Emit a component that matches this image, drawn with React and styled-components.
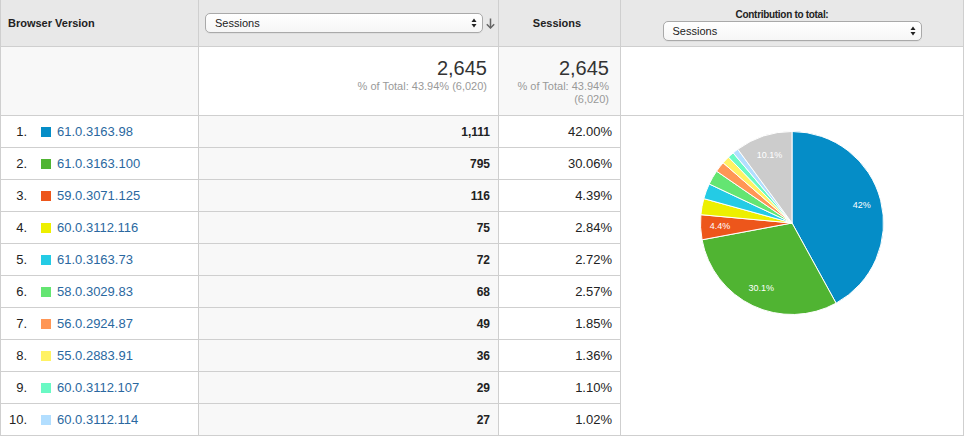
import React from "react";
import styled, { createGlobalStyle } from "styled-components";

const Global = createGlobalStyle`
  html, body { margin: 0; padding: 0; background: #fff; }
  body { font-family: "Liberation Sans", Arial, sans-serif; color: #333; }
`;

const Table = styled.div`
  display: grid;
  grid-template-columns: 198px 300px 122px 343px;
  grid-template-rows: 47px 69px repeat(10, 32px);
  border-left: 1px solid #cfcfcf;
  width: max-content;
`;

const Cell = styled.div`
  box-sizing: border-box;
  border-right: 1px solid #cfcfcf;
  border-bottom: 1px solid #cfcfcf;
  background: ${(p) => (p.$shade ? "#f8f8f8" : "#fff")};
  min-width: 0;
`;

const HeadCell = styled(Cell)`
  background: #e8e8e8;
  display: flex;
  align-items: center;
  justify-content: ${(p) => p.$justify || "flex-start"};
  padding: 0 ${(p) => p.$padR || 0}px 0 ${(p) => p.$padL || 0}px;
  font-size: 11px;
  font-weight: bold;
  color: #222;
`;

const HeadStack = styled(HeadCell)`
  flex-direction: column;
  justify-content: flex-start;
  padding-top: 8px;
  gap: 0;
`;

const HeadLabel = styled.div`
  font-size: 10px;
  letter-spacing: -0.3px;
  line-height: 13px;
  padding-right: 20px;
`;

const SelectBox = styled.div`
  box-sizing: border-box;
  width: ${(p) => p.$w}px;
  height: 20px;
  border: 1px solid #a9a9a9;
  border-radius: 5px;
  background: linear-gradient(#ffffff, #f6f6f6);
  box-shadow: 0 1px 0 rgba(0, 0, 0, 0.04);
  display: flex;
  align-items: center;
  justify-content: space-between;
  padding: 0 5px 0 9px;
  font-size: 11px;
  font-weight: normal;
  color: #222;
`;

const SortIcon = styled.svg`
  margin-left: 3px;
  flex: none;
`;

const TotalCell = styled(Cell)`
  padding: 9px ${(p) => p.$padR}px 0 8px;
  text-align: right;
`;

const BigNum = styled.div`
  font-size: 20px;
  line-height: 24px;
  color: #333;
`;

const SubNum = styled.div`
  font-size: 11px;
  line-height: 13px;
  color: #999;
`;

const NameCell = styled(Cell)`
  display: flex;
  align-items: center;
  padding-left: 8px;
  font-size: 13px;
`;

const RowNum = styled.span`
  width: 18px;
  text-align: right;
  color: #222;
`;

const Swatch = styled.span`
  width: 10px;
  height: 10px;
  margin-left: 14px;
  margin-right: 6px;
  background: ${(p) => p.$c};
  flex: none;
`;

const Link = styled.a`
  color: #2a68a0;
  text-decoration: none;
`;

const ValueCell = styled(Cell)`
  display: flex;
  align-items: center;
  justify-content: flex-end;
  padding-right: ${(p) => p.$padR}px;
  font-size: ${(p) => (p.$bold ? 12 : 13)}px;
  font-weight: ${(p) => (p.$bold ? "bold" : "normal")};
  color: #222;
`;

const PieCell = styled(Cell)`
  grid-column: 4;
  grid-row: 3 / span 10;
  display: flex;
  justify-content: center;
  align-items: flex-start;
  padding-top: 15px;
`;

const rows = [
  ["61.0.3163.98", "#058dc7", "1,111", "42.00%", 42.0],
  ["61.0.3163.100", "#50b432", "795", "30.06%", 30.06],
  ["59.0.3071.125", "#ed561b", "116", "4.39%", 4.39],
  ["60.0.3112.116", "#edef00", "75", "2.84%", 2.84],
  ["61.0.3163.73", "#24cbe5", "72", "2.72%", 2.72],
  ["58.0.3029.83", "#64e572", "68", "2.57%", 2.57],
  ["56.0.2924.87", "#ff9655", "49", "1.85%", 1.85],
  ["55.0.2883.91", "#fff263", "36", "1.36%", 1.36],
  ["60.0.3112.107", "#6af9c4", "29", "1.10%", 1.1],
  ["60.0.3112.114", "#b2deff", "27", "1.02%", 1.02],
];

const Arrows = () => (
  <svg width="6" height="10" viewBox="0 0 6 10">
    <path d="M3 0.5 L5.5 4 L0.5 4 Z" fill="#222" />
    <path d="M3 9.5 L5.5 6 L0.5 6 Z" fill="#222" />
  </svg>
);

const Select = ({ w }) => (
  <SelectBox $w={w}>
    <span>Sessions</span>
    <Arrows />
  </SelectBox>
);

function Pie() {
  const cx = 92;
  const cy = 92;
  const r = 91.5;
  const slices = rows.map((r) => ({ v: r[4], c: r[1] }));
  const sum = slices.reduce((a, b) => a + b.v, 0);
  slices.push({ v: 100 - sum, c: "#cccccc" });
  const labels = { 0: "42%", 1: "30.1%", 2: "4.4%", 10: "10.1%" };
  let acc = 0;
  const pt = (pct, rad) => {
    const a = (pct / 100) * Math.PI * 2;
    return [cx + rad * Math.sin(a), cy - rad * Math.cos(a)];
  };
  return (
    <svg width="184" height="184" viewBox="0 0 184 184">
      {slices.map((s, i) => {
        const start = acc;
        const end = acc + s.v;
        acc = end;
        const [x1, y1] = pt(start, r);
        const [x2, y2] = pt(end, r);
        const large = s.v > 50 ? 1 : 0;
        return (
          <path
            key={i}
            d={`M${cx} ${cy} L${x1} ${y1} A${r} ${r} 0 ${large} 1 ${x2} ${y2} Z`}
            fill={s.c}
            stroke="#fff"
            strokeWidth="1"
          />
        );
      })}
      {(() => {
        let a2 = 0;
        return slices.map((s, i) => {
          const mid = a2 + s.v / 2;
          a2 += s.v;
          if (!labels[i]) return null;
          const [x, y] = pt(mid, 72);
          return (
            <text
              key={"t" + i}
              x={x}
              y={y}
              textAnchor="middle"
              dominantBaseline="central"
              fontSize="9"
              fontFamily="Liberation Sans, Arial, sans-serif"
              fill="#fff"
            >
              {labels[i]}
            </text>
          );
        });
      })()}
    </svg>
  );
}

export default function App() {
  return (
    <>
      <Global />
      <Table>
        <HeadCell $padL={7}>Browser Version</HeadCell>
        <HeadCell $padL={6}>
          <Select w={278} />
          <SortIcon width="9" height="11" viewBox="0 0 9 11">
            <path d="M4.5 0.5 V10" stroke="#666" strokeWidth="1.5" fill="none" />
            <path d="M0.8 6.2 L4.5 10 L8.2 6.2" stroke="#666" strokeWidth="1.5" fill="none" />
          </SortIcon>
        </HeadCell>
        <HeadCell $justify="center" $padR={5}>Sessions</HeadCell>
        <HeadStack>
          <HeadLabel>Contribution to total:</HeadLabel>
          <Select w={259} />
        </HeadStack>

        <TotalCell $shade $padR={11} />
        <TotalCell $padR={11}>
          <BigNum>2,645</BigNum>
          <SubNum>% of Total: 43.94% (6,020)</SubNum>
        </TotalCell>
        <TotalCell $shade $padR={11}>
          <BigNum>2,645</BigNum>
          <SubNum>% of Total: 43.94% (6,020)</SubNum>
        </TotalCell>
        <TotalCell $padR={11} />

        {rows.map(([name, color, sessions, pct], i) => (
          <React.Fragment key={name}>
            <NameCell>
              <RowNum>{i + 1}.</RowNum>
              <Swatch $c={color} />
              <Link href="#">{name}</Link>
            </NameCell>
            <ValueCell $shade $bold $padR={8}>
              {sessions}
            </ValueCell>
            <ValueCell $padR={8}>{pct}</ValueCell>
            {i === 0 && (
              <PieCell>
                <Pie />
              </PieCell>
            )}
          </React.Fragment>
        ))}
      </Table>
    </>
  );
}
